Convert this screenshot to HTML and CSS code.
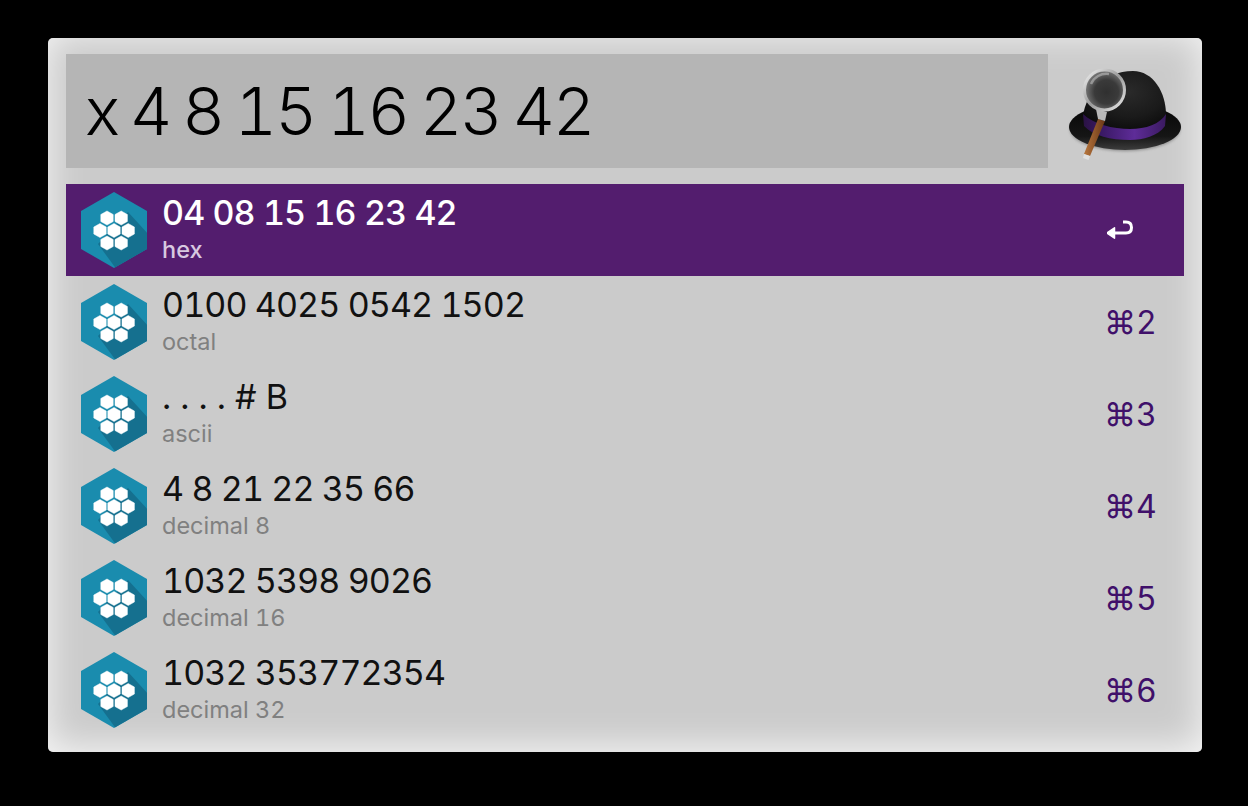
FILE: index.html
```html
<!DOCTYPE html>
<html lang="en">
<head>
<meta charset="utf-8">
<title>Alfred</title>
<link rel="stylesheet" href="styles.css">
</head>
<body>
<svg class="defs" width="0" height="0" aria-hidden="true">
  <defs>
    <clipPath id="hexclip"><polygon points="33,0 66,19 66,57 33,76 0,57 0,19"/></clipPath>
    <polygon id="cell" points="0,-7 6.200,-3.500 6.200,3.500 0,7 -6.200,3.500 -6.200,-3.500"/>
    <symbol id="hexicon" viewBox="0 0 66 76">
      <polygon points="33,0 66,19 66,57 33,76 0,57 0,19" fill="#1a8cae"/>
      <polygon clip-path="url(#hexclip)" points="47,20 70,45 70,60 36,78 17,52" fill="#15708f"/>
      <g fill="#fff" stroke="#fff" stroke-width=".5" stroke-linejoin="round">
        <use href="#cell" x="26" y="26"/><use href="#cell" x="40.200" y="26"/>
        <use href="#cell" x="19" y="38.500"/><use href="#cell" x="33" y="38.500"/><use href="#cell" x="47.200" y="38.500"/>
        <use href="#cell" x="26" y="51"/><use href="#cell" x="40.200" y="51"/>
      </g>
    </symbol>
    <radialGradient id="crown" cx="0.55" cy="0.35" r="0.7"><stop offset="0" stop-color="#2a2a2a"/><stop offset="0.6" stop-color="#1a1a1a"/><stop offset="1" stop-color="#0a0a0a"/></radialGradient>
    <linearGradient id="brim" x1="0" y1="0" x2="0" y2="1"><stop offset="0" stop-color="#060606"/><stop offset="0.7" stop-color="#151515"/><stop offset="1" stop-color="#3c3c3c"/></linearGradient>
    <linearGradient id="band" x1="0" y1="0" x2="1" y2="0"><stop offset="0" stop-color="#2a1244"/><stop offset="0.25" stop-color="#3c1a68"/><stop offset="0.62" stop-color="#5e2c98"/><stop offset="1" stop-color="#3a1a60"/></linearGradient>
    <radialGradient id="lens" cx="0.55" cy="0.55" r="0.6"><stop offset="0" stop-color="#303030"/><stop offset="0.5" stop-color="#3a3a3a"/><stop offset="0.85" stop-color="#707070"/><stop offset="1" stop-color="#b0b0b0"/></radialGradient>
    <linearGradient id="rim" x1="0" y1="0" x2="1" y2="1"><stop offset="0" stop-color="#f4f4f4"/><stop offset="0.5" stop-color="#9a9a9a"/><stop offset="1" stop-color="#e8e8e8"/></linearGradient>
    <linearGradient id="handle" x1="0" y1="0" x2="1" y2="0"><stop offset="0" stop-color="#b8773e"/><stop offset="1" stop-color="#6a3716"/></linearGradient>
    <filter id="soft"><feGaussianBlur stdDeviation="1.500"/></filter>
  </defs>
</svg>
<main class="window">
  <header class="top">
    <div class="search">x 4 8 15 16 23 42</div>
    <svg class="hat" viewBox="0 0 114 100" aria-hidden="true">
      <ellipse cx="57" cy="65" rx="55" ry="22" fill="#555" opacity=".55" filter="url(#soft)"/>
      <ellipse cx="57" cy="63" rx="56" ry="23" fill="url(#brim)"/>
      <path d="M15 52 C18 30 35 7 65 7 C85 7 98 28 98 51 C92 72 26 72 15 52Z" fill="url(#crown)"/>
      <path d="M15 50 C25 60 45 65 62 65 C78 65 92 60 98 50 L97 62 C90 72 75 76 62 76 C42 76 26 72 16 62Z" fill="url(#band)"/>
      <path d="M30 55 L37 57 L22 92 L16 90Z" fill="url(#handle)"/>
      <path d="M16 90 L22 92 L20.500 96 L15 94Z" fill="#e0e0e0"/>
      <path d="M28 45 L39 48 L37 57 L30 55Z" fill="#b9b9b9"/>
      <circle cx="36.500" cy="26" r="20" fill="url(#lens)" stroke="url(#rim)" stroke-width="3"/>
      <path d="M23 20 C26 13 33 9 41 10" fill="none" stroke="#fff" stroke-opacity=".35" stroke-width="2.500"/>
    </svg>
  </header>
  <ul class="results">
    <li class="row selected">
      <svg class="hex"><use href="#hexicon"/></svg>
      <div class="text"><div class="title">04 08 15 16 23 42</div><div class="sub">hex</div></div>
      <svg class="enter" viewBox="0 0 26 21" aria-hidden="true"><path d="M0 13 L7.500 7.800 V18.200Z" fill="#fff" stroke="#fff" stroke-width="1.500" stroke-linejoin="round"/><path d="M6 13 H19 C22.500 13 24.500 11 24.500 7.500 C24.500 4 22.500 2 19 2 H16" fill="none" stroke="#fff" stroke-width="3"/></svg>
    </li>
    <li class="row">
      <svg class="hex"><use href="#hexicon"/></svg>
      <div class="text"><div class="title">0100 4025 0542 1502</div><div class="sub">octal</div></div>
      <div class="key">⌘2</div>
    </li>
    <li class="row">
      <svg class="hex"><use href="#hexicon"/></svg>
      <div class="text"><div class="title ascii">. . . . # B</div><div class="sub">ascii</div></div>
      <div class="key">⌘3</div>
    </li>
    <li class="row">
      <svg class="hex"><use href="#hexicon"/></svg>
      <div class="text"><div class="title">4 8 21 22 35 66</div><div class="sub">decimal 8</div></div>
      <div class="key">⌘4</div>
    </li>
    <li class="row">
      <svg class="hex"><use href="#hexicon"/></svg>
      <div class="text"><div class="title">1032 5398 9026</div><div class="sub">decimal 16</div></div>
      <div class="key">⌘5</div>
    </li>
    <li class="row">
      <svg class="hex"><use href="#hexicon"/></svg>
      <div class="text"><div class="title">1032 353772354</div><div class="sub">decimal 32</div></div>
      <div class="key">⌘6</div>
    </li>
  </ul>
</main>
</body>
</html>
```
FILE: styles.css
```css
html, body {
  margin: 0;
  height: 100%;
  background: #000;
  overflow: hidden;
}
body {
  padding: 38px 46px 54px 48px;
  box-sizing: border-box;
  font-family: Inter, "DejaVu Sans", sans-serif;
  font-variant-numeric: tabular-nums;
}
.defs { position: absolute; }
.window {
  width: 1154px;
  height: 714px;
  box-sizing: border-box;
  padding: 16px 18px 0;
  background: #cbcbcb;
  border-radius: 5px;
  box-shadow: inset 0 -4px 36px rgba(255, 255, 255, .85);
}
.top {
  display: flex;
  align-items: flex-start;
  height: 114px;
}
.search {
  width: 982px;
  height: 114px;
  box-sizing: border-box;
  padding-left: 19px;
  background: #b5b5b5;
  color: #000;
  font-size: 66px;
  font-weight: 300;
  line-height: 114px;
  letter-spacing: -2.500px;
  word-spacing: -3px;
}
.hat {
  width: 114px;
  height: 100px;
  margin-left: 20px;
  margin-top: 10px;
  overflow: visible;
}
.results {
  list-style: none;
  margin: 16px 0 0;
  padding: 0;
}
.row {
  display: flex;
  align-items: center;
  height: 92px;
  padding-left: 15px;
}
.row.selected { background: #531d6e; }
.hex {
  width: 66px;
  height: 76px;
  flex: none;
}
.text {
  flex: 1;
  margin-left: 15px;
}
.title {
  color: #111;
  font-size: 34px;
  line-height: 40px;
  font-weight: 400;
  letter-spacing: -.9px;
  margin-top: -3px;
  margin-bottom: 3px;
}
.title.ascii { letter-spacing: 0; }
.sub {
  color: #808080;
  font-size: 23.500px;
  line-height: 28px;
}
.selected .title { color: #fff; font-weight: 500; }
.selected .sub { color: #d8c8e0; font-weight: 500; }
.key {
  width: 80px;
  color: #40106a;
  font-size: 32px;
  margin-top: 0;
}
.enter {
  width: 26px;
  height: 21px;
  margin-right: 51px;
  margin-top: 1px;
}
```
